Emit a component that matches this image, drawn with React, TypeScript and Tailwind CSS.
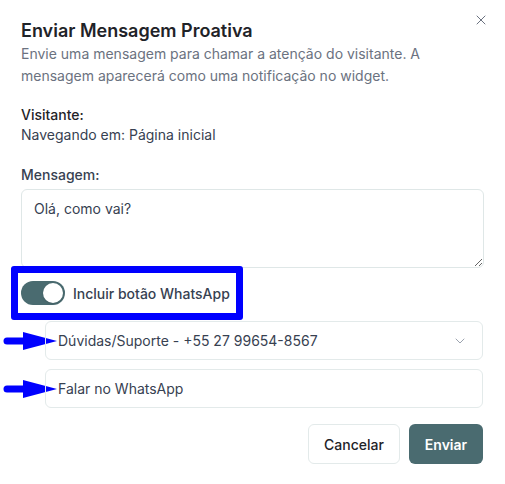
import { X, ChevronDown } from 'lucide-react';

function Arrow() {
    return (
        <svg width="57" height="20" viewBox="0 0 57 20" className="shrink-0">
            <line x1="7" y1="10" x2="28" y2="10" stroke="#0000ff" strokeWidth="7" strokeLinecap="round" />
            <polygon points="23,1 57,10 23,19" fill="#0000ff" />
        </svg>
    );
}

export default function App() {
    return (
        <main className="w-[505px] h-[484px] bg-white relative font-['Inter',sans-serif] text-[#1f2328]">
            <button className="absolute right-[16px] top-[12px] text-[#6b7280]">
                <X className="w-4 h-4" strokeWidth={1.5} />
            </button>

            <div className="px-[21px] pt-[19px]">
                {/* Header */}
                <h1 className="text-[18px] font-semibold leading-[24px] text-[#1f2328]">Enviar Mensagem Proativa</h1>
                <p className="text-[14px] leading-[22px] text-[#6b7280]">
                    Envie uma mensagem para chamar a atenção do visitante. A mensagem aparecerá como uma notificação no widget.
                </p>

                {/* Visitor */}
                <div className="mt-[18px] text-[14px] leading-[20px] text-[#374151]">
                    <div className="font-medium text-[#1f2328]">Visitante:</div>
                    <div>Navegando em: Página inicial</div>
                </div>

                {/* Message */}
                <div className="mt-[20px]">
                    <label className="block text-[14px] leading-[20px] font-medium text-[#374151]">Mensagem:</label>
                    <textarea
                        defaultValue="Olá, como vai?"
                        className="mt-[4px] block w-full h-[79px] rounded-md border border-[#dfe7e7] px-[12px] py-[9px] text-[14px] leading-[20px] text-[#374151] outline-none resize-y"
                    />
                </div>
            </div>

            {/* Toggle, highlighted */}
            <div className="ml-[11px] mt-[-2px] w-[232px] h-[54px] border-[7px] border-[#0000ff] rounded-[3px] flex items-center pl-[3px] gap-[8px]">
                <div className="w-[44px] h-[24px] rounded-full bg-[#4a6b70] flex items-center justify-end p-[2px] shrink-0">
                    <div className="w-[20px] h-[20px] rounded-full bg-white shadow" />
                </div>
                <span className="text-[14px] font-medium text-[#374151] whitespace-nowrap">Incluir botão WhatsApp</span>
            </div>

            {/* WhatsApp fields */}
            <div className="mt-[1px] flex flex-col gap-[9px] pr-[22px]">
                <div className="flex items-center">
                    <div className="w-[45px] flex"><Arrow /></div>
                    <div className="flex-1 h-[39px] rounded-md border border-[#e3eaea] flex items-center justify-between pl-[12px] pr-[14px] text-[14px] text-[#374151]">
                        <span>Dúvidas/Suporte - +55 27 99654-8567</span>
                        <ChevronDown className="w-4 h-4 text-[#9ca3af]" strokeWidth={1.5} />
                    </div>
                </div>
                <div className="flex items-center">
                    <div className="w-[45px] flex"><Arrow /></div>
                    <div className="flex-1 h-[39px] rounded-md border border-[#e3eaea] flex items-center pl-[12px] text-[14px] text-[#374151]">
                        Falar no WhatsApp
                    </div>
                </div>
            </div>

            {/* Footer */}
            <div className="mt-[16px] flex justify-end gap-[9px] pr-[22px]">
                <button className="h-[40px] w-[92px] rounded-md border border-[#e3eaea] bg-white text-[14px] font-medium text-[#1f2328]">Cancelar</button>
                <button className="h-[40px] w-[74px] rounded-md bg-[#4a6b70] text-[14px] font-semibold text-white">Enviar</button>
            </div>
        </main>
    );
}
